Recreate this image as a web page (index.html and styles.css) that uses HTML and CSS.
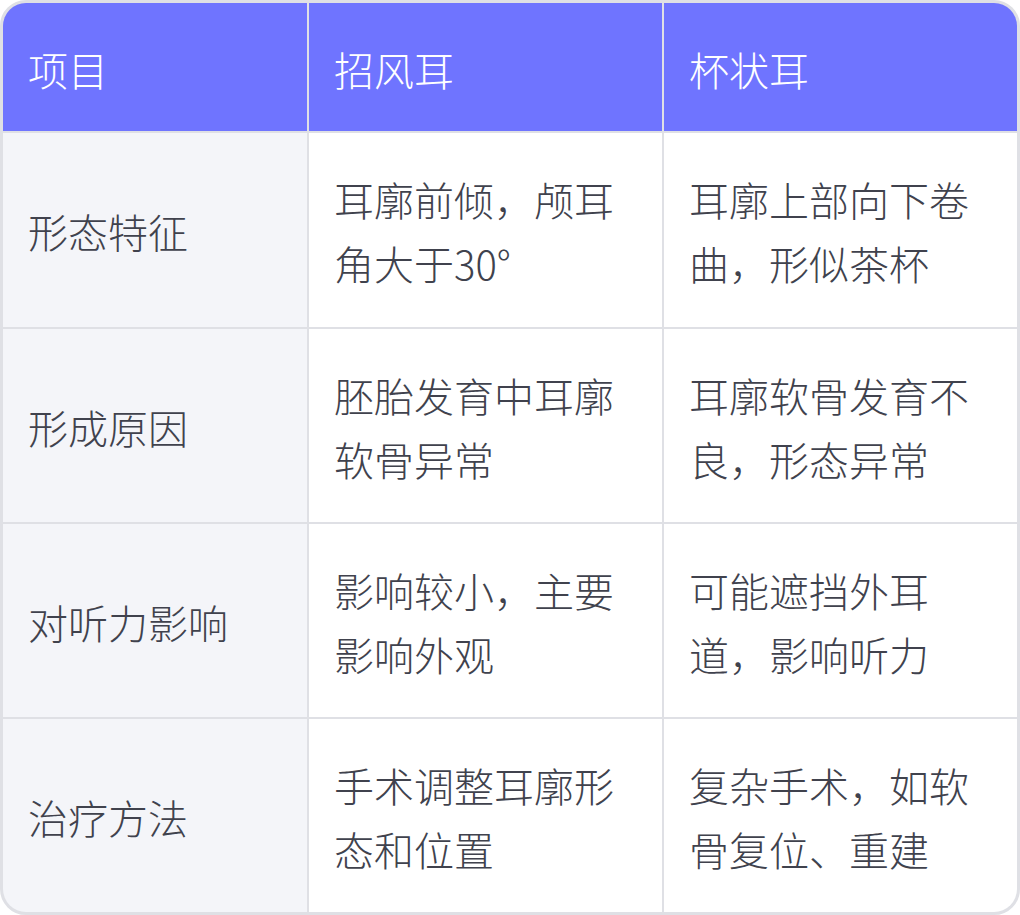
FILE: index.html
```html
<!DOCTYPE html>
<html lang="zh-CN">
<head>
<meta charset="utf-8">
<title>招风耳与杯状耳对比</title>
<link rel="stylesheet" href="styles.css">
</head>
<body>
<div class="table">
  <div class="cell head">项目</div>
  <div class="cell head">招风耳</div>
  <div class="cell head">杯状耳</div>

  <div class="cell label first">形态特征</div>
  <div class="cell first">耳廓前倾，颅耳角大于30°</div>
  <div class="cell first">耳廓上部向下卷曲，形似茶杯</div>

  <div class="cell label">形成原因</div>
  <div class="cell">胚胎发育中耳廓软骨异常</div>
  <div class="cell">耳廓软骨发育不良，形态异常</div>

  <div class="cell label">对听力影响</div>
  <div class="cell">影响较小，主要影响外观</div>
  <div class="cell">可能遮挡外耳道，影响听力</div>

  <div class="cell label">治疗方法</div>
  <div class="cell">手术调整耳廓形态和位置</div>
  <div class="cell">复杂手术，如软骨复位、重建</div>
</div>
</body>
</html>
```

FILE: styles.css
```css
html, body {
  margin: 0;
  padding: 0;
  background: #ffffff;
}

body {
  width: 1020px;
  height: 915px;
  overflow: hidden;
}

.table {
  box-sizing: border-box;
  width: 1020px;
  display: grid;
  grid-template-columns: 304px 353px 353px;
  gap: 2px;
  background: #dfe0e5;
  border: 3px solid #dfe0e5;
  border-radius: 26px;
  overflow: hidden;
  font-family: "Noto Sans CJK SC", "Noto Sans", sans-serif;
  font-size: 40px;
  font-weight: 300;
  line-height: 64px;
  color: #40424d;
}

.cell {
  display: flex;
  align-items: center;
  padding: 34px 25px 31px 25px;
  background: #ffffff;
}

.head {
  padding-top: 34px;
  padding-bottom: 30px;
  background: #6f74ff;
  color: #ffffff;
}

.first {
  padding-bottom: 32px;
}

.label {
  background: #f4f5f9;
}
```
